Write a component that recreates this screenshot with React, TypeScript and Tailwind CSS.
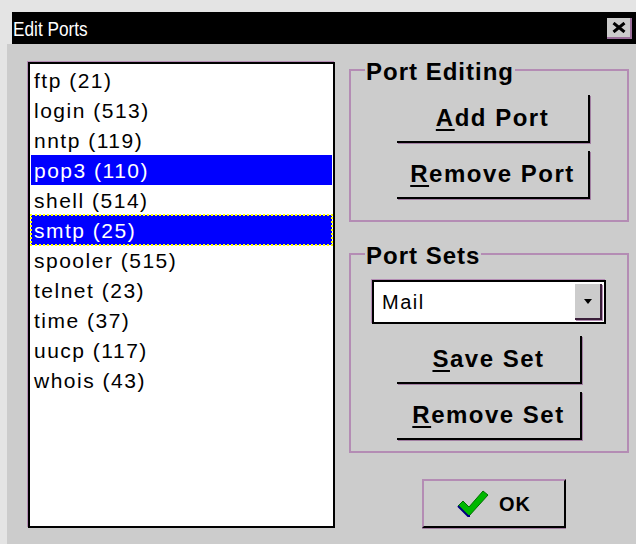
import React from "react";

const ports = [
  { name: "ftp (21)" },
  { name: "login (513)" },
  { name: "nntp (119)" },
  { name: "pop3 (110)", selected: true },
  { name: "shell (514)" },
  { name: "smtp (25)", selected: true, focused: true },
  { name: "spooler (515)" },
  { name: "telnet (23)" },
  { name: "time (37)" },
  { name: "uucp (117)" },
  { name: "whois (43)" },
];

function PushButton({
  hot,
  rest,
  width,
}: {
  hot: string;
  rest: string;
  width: string;
}) {
  return (
    <button
      className={`${width} h-[48px] flex items-center justify-center border-r-2 border-b-2 border-black shadow-[1px_1px_0_#a27fa2] text-[24px] font-bold tracking-[1.5px] text-black leading-none`}
    >
      <span className="underline underline-offset-[3px] decoration-2">{hot}</span>
      <span>{rest}</span>
    </button>
  );
}

function GroupBox({
  label,
  height,
  className,
  children,
}: {
  label: string;
  height: string;
  className?: string;
  children: React.ReactNode;
}) {
  return (
    <div className={`relative ${height} border-2 border-[#b48cb4] ${className ?? ""}`}>
      <div className="absolute left-[14px] top-[-13px] px-[1px] bg-[#cccccc] text-[24px] leading-[28px] font-bold tracking-[1px] text-black">
        {label}
      </div>
      {children}
    </div>
  );
}

function CheckMark() {
  return (
    <svg width="32" height="29" viewBox="0 0 32 29">
      <polygon
        points="1,17 6,12 12,18 26,2 31,6 12,27"
        fill="#00b800"
        stroke="#007000"
        strokeWidth="1"
      />
      <polyline
        points="1,17 11,27 13,27"
        fill="none"
        stroke="#000080"
        strokeWidth="2"
      />
    </svg>
  );
}

export default function App() {
  return (
    <div className="w-[636px] h-[544px] bg-[#e4e4e4] overflow-hidden font-['Liberation_Sans',Arial,sans-serif]">
      {/* caption bar */}
      <div className="ml-[12px] mt-[12px] h-[32px] bg-black flex items-center justify-between pl-[1px] pr-[4px]">
        <span className="text-white text-[21px] leading-none origin-left scale-x-[0.82] inline-block">
          Edit Ports
        </span>
        <div className="w-[25px] h-[21px] bg-[#cccccc] border-r-2 border-b-2 border-[#9a6f9a] flex items-center justify-center">
          <svg width="14" height="11" viewBox="0 0 14 11">
            <path d="M1.5 1 L12.5 10 M12.5 1 L1.5 10" stroke="black" strokeWidth="3" />
          </svg>
        </div>
      </div>

      {/* dialog body */}
      <div className="ml-[7px] h-[500px] bg-[#cccccc] flex pl-[21px] pt-[18px]">
        {/* port list */}
        <div className="w-[307px] h-[466px] bg-white border-2 border-black shadow-[-1px_-1px_0_#b48cb4] pt-[1px] px-[1px]">
          {ports.map((p) => (
            <div
              key={p.name}
              className={`h-[30px] flex items-center pl-[3px] text-[21px] tracking-[1.5px] leading-none ${
                p.selected ? "bg-[#0000ff] text-white" : "text-black"
              } ${p.focused ? "outline-2 outline-dotted outline-[#ffff00] -outline-offset-1" : ""}`}
            >
              {p.name}
            </div>
          ))}
        </div>

        {/* right column */}
        <div className="ml-[14px] w-[280px] flex flex-col pt-[7px]">
          <GroupBox label="Port Editing" height="h-[153px]">
            <div className="flex flex-col gap-[8px] pl-[46px] pt-[24px]">
              <PushButton hot="A" rest="dd Port" width="w-[193px]" />
              <PushButton hot="R" rest="emove Port" width="w-[193px]" />
            </div>
          </GroupBox>

          <GroupBox label="Port Sets" height="h-[200px]" className="mt-[31px]">
            <div className="flex flex-col pl-[21px] pt-[25px]">
              <div className="w-[234px] h-[44px] bg-white border-2 border-black shadow-[-1px_-1px_0_#b48cb4] flex items-center justify-between pl-[8px] pr-[2px]">
                <span className="text-[20px] tracking-[1.5px] text-black leading-none">Mail</span>
                <div className="w-[27px] h-[36px] bg-[#cccccc] border-r-2 border-b-2 border-[#3a1f3a] shadow-[1px_1px_0_#b48cb4] flex items-center justify-center">
                  <svg width="8" height="5" viewBox="0 0 8 5">
                    <polygon points="0,0 8,0 4,5" fill="black" />
                  </svg>
                </div>
              </div>
              <div className="flex flex-col gap-[8px] pl-[25px] mt-[12px]">
                <PushButton hot="S" rest="ave Set" width="w-[185px]" />
                <PushButton hot="R" rest="emove Set" width="w-[185px]" />
              </div>
            </div>
          </GroupBox>

          <div className="mt-[26px] ml-[73px]">
            <button className="w-[144px] h-[49px] flex items-center justify-center gap-[10px] border-t-2 border-l-2 border-[#b48cb4] border-r-2 border-b-2 border-r-black border-b-black shadow-[0_1px_0_#a27fa2]">
              <CheckMark />
              <span className="text-[20px] font-bold tracking-[1px] text-black leading-none">OK</span>
            </button>
          </div>
        </div>
      </div>
    </div>
  );
}
